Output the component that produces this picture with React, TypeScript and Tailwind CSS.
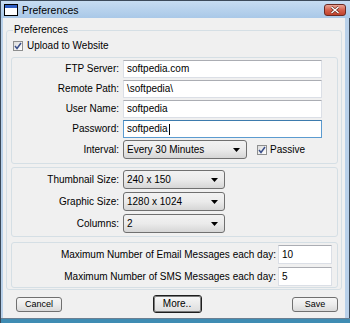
import React from "react";

function CheckMark() {
  return (
    <span className="flex h-[10px] w-[10px] shrink-0 items-center justify-center border border-[#8e8f8f] bg-gradient-to-br from-[#dcdcdc] to-[#ffffff]">
      <svg width="8" height="8" viewBox="0 0 8 8">
        <path d="M1 4 L3 6.5 L7 1" fill="none" stroke="#3a4f8a" strokeWidth="1.5" />
      </svg>
    </span>
  );
}

function TextBox({
  value,
  width,
  height = 18,
  focused = false,
}: {
  value: string;
  width: string;
  height?: number;
  focused?: boolean;
}) {
  return (
    <div
      className={
        "flex items-center bg-white pl-[3px] " +
        width +
        (height === 18 ? " h-[18px]" : " h-[19px]") +
        (focused
          ? " border border-[#5b9bd0] border-t-[#3d7bad]"
          : " border border-[#dbdfe6] border-t-[#abadb3]")
      }
    >
      <span>{value}</span>
      {focused && <span className="ml-[1px] h-[11px] w-[1px] bg-black" />}
    </div>
  );
}

function Select({ value, width }: { value: string; width: string }) {
  return (
    <div
      className={
        "flex h-[19px] items-center justify-between rounded-[3px] border border-[#707070] bg-gradient-to-b from-[#f2f2f2] via-[#ebebeb] to-[#d6d6d6] pl-[3px] pr-[6px] " +
        width
      }
    >
      <span>{value}</span>
      <svg width="7" height="4" viewBox="0 0 7 4">
        <path d="M0 0 H7 L3.5 4 Z" fill="#000" />
      </svg>
    </div>
  );
}

function Button({ label, primary = false }: { label: string; primary?: boolean }) {
  if (primary) {
    return (
      <div className="flex h-[18px] w-[49px] items-center justify-center rounded-[3px] border border-[#1e1e1e] bg-[#f4f4f4]">
        <div className="flex h-full w-full items-center justify-center rounded-[2px] border border-[#7a7a7a] bg-gradient-to-b from-[#f6f6f6] to-[#dedede]">
          {label}
        </div>
      </div>
    );
  }
  return (
    <div className="flex h-[15px] w-[46px] items-center justify-center rounded-[3px] border border-[#707070] bg-gradient-to-b from-[#f6f6f6] via-[#ececec] to-[#d9d9d9] text-[9px]">
      {label}
    </div>
  );
}

function Row({ label, children }: { label: string; children: React.ReactNode }) {
  return (
    <div className="flex items-center gap-[4px]">
      <span className="w-[107px] shrink-0 text-right">{label}</span>
      {children}
    </div>
  );
}

export default function App() {
  return (
    <div className="flex h-[323px] w-[350px] flex-col overflow-hidden border-l border-t border-[#3c4a5a] bg-[#b9d1ea] font-['Liberation_Sans',Arial,sans-serif] text-[10px] leading-[12px] text-black">
      {/* title bar */}
      <div className="flex h-[17px] shrink-0 items-center bg-gradient-to-b from-[#c6dcf1] to-[#a9c8e8] pl-[3px] pr-[4px]">
        <div className="flex h-[12px] w-[14px] flex-col border border-black bg-white">
          <div className="h-[3px] bg-[#2f5fc4]" />
        </div>
        <span className="ml-[4px] text-[10.5px]">Preferences</span>
        <div className="ml-auto flex h-[12px] w-[22px] items-center justify-center rounded-[3px] border border-[#6b2a22] bg-gradient-to-b from-[#e9a596] via-[#d5614c] to-[#c0422c]">
          <svg width="10" height="8" viewBox="0 0 10 8">
            <path d="M1.5 1 L8.5 7 M8.5 1 L1.5 7" stroke="#5a2018" strokeWidth="2.6" />
            <path d="M1.5 1 L8.5 7 M8.5 1 L1.5 7" stroke="#ffffff" strokeWidth="1.5" />
          </svg>
        </div>
      </div>

      <div className="flex min-h-0 flex-1">
        <div className="w-[2px] shrink-0 bg-[#b9d1ea]" />
        <div className="flex flex-1 flex-col bg-[#f0f0f0]">
          <fieldset className="ml-[3px] mr-[3px] mt-[6px] rounded-[3px] border border-[#d5dfe5]">
            <legend className="ml-[6px] px-[1px] leading-[12px]">Preferences</legend>
            <div className="flex flex-col pb-[1px] pl-[4px] pr-[3px]">
              <div className="mt-[3px] flex h-[13px] items-center gap-[4px] pl-[2px]">
                <CheckMark />
                <span>Upload to Website</span>
              </div>

              {/* connection box */}
              <div className="mt-[5px] flex flex-col gap-[2px] rounded-[3px] border border-[#d5dfe5] pb-[4px] pt-[2px]">
                <Row label="FTP Server:">
                  <TextBox value="softpedia.com" width="w-[199px]" />
                </Row>
                <Row label="Remote Path:">
                  <TextBox value="\softpedia\" width="w-[199px]" />
                </Row>
                <Row label="User Name:">
                  <TextBox value="softpedia" width="w-[199px]" />
                </Row>
                <Row label="Password:">
                  <TextBox value="softpedia" width="w-[199px]" focused />
                </Row>
                <Row label="Interval:">
                  <Select value="Every 30 Minutes" width="w-[124px]" />
                  <div className="ml-[6px] flex items-center gap-[3px]">
                    <CheckMark />
                    <span>Passive</span>
                  </div>
                </Row>
              </div>

              {/* image box */}
              <div className="mt-[3px] flex flex-col gap-[3px] rounded-[3px] border border-[#d5dfe5] pb-[3px] pt-[2px]">
                <Row label="Thumbnail Size:">
                  <Select value="240 x 150" width="w-[102px]" />
                </Row>
                <Row label="Graphic Size:">
                  <Select value="1280 x 1024" width="w-[102px]" />
                </Row>
                <Row label="Columns:">
                  <Select value="2" width="w-[102px]" />
                </Row>
              </div>

              {/* message limits box */}
              <div className="mt-[5px] flex flex-col gap-[3px] rounded-[3px] border border-[#d5dfe5] pb-[1px] pr-[5px] pt-[2px]">
                <div className="flex items-center justify-end gap-[2px]">
                  <span>Maximum Number of Email Messages each day:</span>
                  <TextBox value="10" width="w-[54px]" height={19} />
                </div>
                <div className="flex items-center justify-end gap-[2px]">
                  <span>Maximum Number of SMS Messages each day:</span>
                  <TextBox value="5" width="w-[54px]" height={19} />
                </div>
              </div>
            </div>
          </fieldset>

          {/* buttons */}
          <div className="flex flex-1 items-center justify-between pl-[13px] pr-[7px]">
            <Button label="Cancel" />
            <Button label="More.." primary />
            <Button label="Save" />
          </div>
        </div>
        <div className="w-[5px] shrink-0 border-r border-[#3c4a5a] bg-[#b9d1ea]" />
      </div>
      <div className="h-[5px] shrink-0 border-t border-[#6b7f92] bg-[#3f8cb3]" />
    </div>
  );
}
